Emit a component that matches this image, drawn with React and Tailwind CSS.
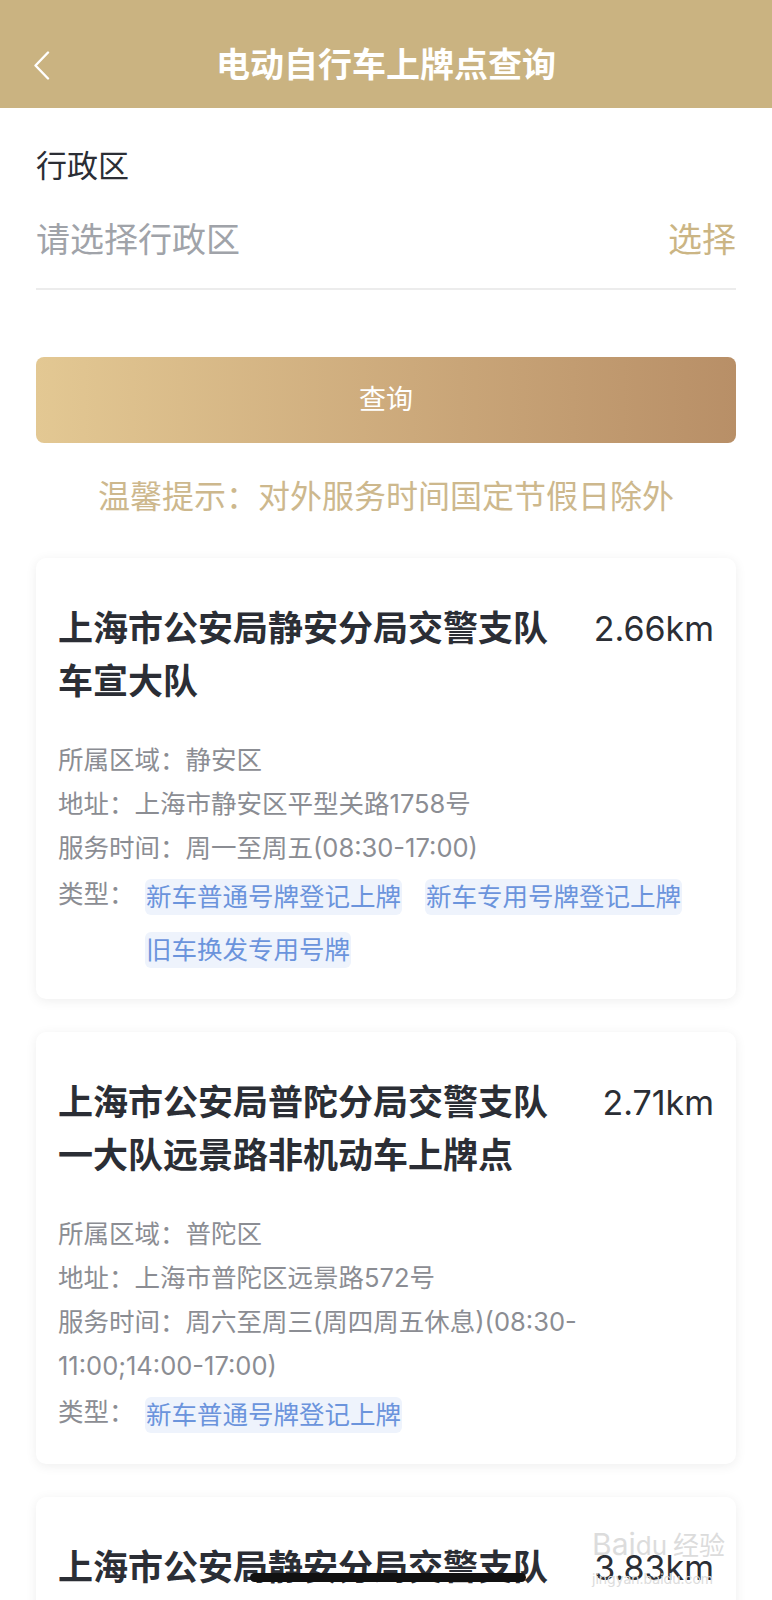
import React from "react";

const font = { fontFamily: "Inter, 'Noto Sans CJK SC', sans-serif" };

const stations = [
  {
    name: "上海市公安局静安分局交警支队车宣大队",
    distance: "2.66km",
    area: "静安区",
    address: "上海市静安区平型关路1758号",
    hours: "周一至周五(08:30-17:00)",
    types: ["新车普通号牌登记上牌", "新车专用号牌登记上牌", "旧车换发专用号牌"],
  },
  {
    name: "上海市公安局普陀分局交警支队一大队远景路非机动车上牌点",
    distance: "2.71km",
    area: "普陀区",
    address: "上海市普陀区远景路572号",
    hours: "周六至周三(周四周五休息)(08:30-11:00;14:00-17:00)",
    types: ["新车普通号牌登记上牌"],
  },
  {
    name: "上海市公安局静安分局交警支队共和新路大队",
    distance: "3.83km",
    area: "静安区",
    address: "上海市静安区共和新路3088号",
    hours: "周一至周五(08:30-17:00)",
    types: ["新车普通号牌登记上牌"],
  },
];

function StationCard({ s }) {
  return (
    <div className="bg-white rounded-[10px] shadow-[0_2px_12px_rgba(0,0,0,0.07)] px-[22px] pt-[44px] pb-[31px]">
      <div className="flex items-start gap-[26px]">
        <h3 className="flex-1 text-[35px] leading-[53px] font-semibold text-[#2b2e35]">
          {s.name}
        </h3>
        <span className="shrink-0 text-[34px] leading-[53px] text-[#2b2e35]">
          {s.distance}
        </span>
      </div>
      <div className="mt-[30px] text-[25.5px] leading-[44px] text-[#8b8d93]">
        <p>所属区域：{s.area}</p>
        <p>地址：{s.address}</p>
        <p>服务时间：{s.hours}</p>
        <div className="flex items-start mt-[9px]">
          <span className="shrink-0 leading-[30px] w-[87px]">类型：</span>
          <div className="flex flex-wrap gap-x-[23px] gap-y-[17px]">
            {s.types.map((t, i) => (
              <span
                key={i}
                className="px-[1px] h-[36px] leading-[36px] rounded-[6px] bg-[#eef3fc] text-[#6b94dc]"
              >
                {t}
              </span>
            ))}
          </div>
        </div>
      </div>
    </div>
  );
}

export default function App() {
  return (
    <div className="relative w-[772px] h-[1600px] overflow-hidden bg-white" style={font}>
      {/* header */}
      <div className="relative h-[108px] bg-[#cab381] flex justify-center pt-[42px]">
        <svg
          className="absolute left-[33px] top-[51px]"
          width="18"
          height="29"
          viewBox="0 0 18 29"
          fill="none"
        >
          <polyline
            points="15,1.5 2.5,14.5 15,27.5"
            stroke="white"
            strokeWidth="2.4"
            strokeLinecap="round"
            strokeLinejoin="round"
          />
        </svg>
        <h1 className="text-[34px] leading-[46px] font-semibold text-white">电动自行车上牌点查询</h1>
      </div>

      <div className="px-[36px]">
        <p className="pt-[38px] text-[31px] leading-[40px] text-[#2b2e35]">行政区</p>
        <div className="mt-[32px] flex items-center justify-between text-[34px] leading-[44px] pb-[26px] border-b-2 border-[#ececec]">
          <span className="text-[#a0a3a9]">请选择行政区</span>
          <span className="text-[#cbb584]">选择</span>
        </div>

        <button className="mt-[67px] w-full h-[86px] rounded-[8px] bg-gradient-to-r from-[#e3c893] to-[#b88f67] text-white text-[27px]">
          查询
        </button>

        <p className="mt-[34px] text-center text-[32px] leading-[40px] text-[#cdb88d]">
          温馨提示：对外服务时间国定节假日除外
        </p>

        <div className="mt-[41px] flex flex-col gap-[33px]">
          {stations.map((s, i) => (
            <StationCard key={i} s={s} />
          ))}
        </div>
      </div>

      {/* watermark */}
      <div className="absolute left-[592px] top-[1528px] flex flex-col items-start text-[#dcdcdc] select-none pointer-events-none">
        <div className="text-[30px] leading-[32px]">
          Bai<span className="text-[26px]">du</span>
          <span className="text-[26px] ml-[6px]">经验</span>
        </div>
        <div className="text-[14px] leading-[18px] mt-[8px]">jingyan.baidu.com</div>
      </div>

      {/* home indicator */}
      <div className="absolute left-[250px] top-[1573px] w-[276px] h-[9px] rounded-full bg-[#111]" />
    </div>
  );
}
